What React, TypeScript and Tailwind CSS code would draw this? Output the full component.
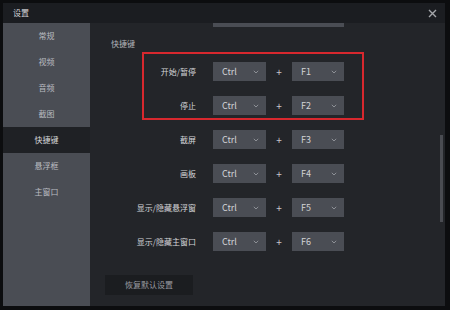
import React from "react";

const font = { fontFamily: '"Noto Sans CJK SC", "Noto Sans", sans-serif' };

const menu = ["常规", "视频", "音频", "截图", "快捷键", "悬浮框", "主窗口"];

const shortcuts = [
  { label: "开始/暂停", key: "F1" },
  { label: "停止", key: "F2" },
  { label: "截屏", key: "F3" },
  { label: "画板", key: "F4" },
  { label: "显示/隐藏悬浮窗", key: "F5" },
  { label: "显示/隐藏主窗口", key: "F6" },
];

const Chevron = () => (
  <svg width="6" height="4" viewBox="0 0 6 4" className="shrink-0">
    <path d="M0.8 0.8 L3 3 L5.2 0.8" fill="none" stroke="#8d9096" strokeWidth="1" />
  </svg>
);

const Select = ({ value, width }: { value: string; width: string }) => (
  <div className={`${width} h-[19px] bg-[#4a4d54] flex items-center justify-between pl-[9px] pr-[7px]`}>
    <span className="text-[9px] leading-none text-[#d2d3d6]">{value}</span>
    <Chevron />
  </div>
);

export default function App() {
  return (
    <div
      className="w-[450px] h-[310px] bg-[#0c0d0f] pt-[3px] pl-[3px] pr-[5px] pb-[4px] flex"
      style={font}
    >
      <div className="flex-1 flex flex-col">
        {/* title bar */}
        <div className="h-[20px] bg-[#1b1d21] flex items-center justify-between pl-[10px] pr-[8px]">
          <span className="text-[8px] text-[#d4d5d8]">设置</span>
          <svg width="9" height="9" viewBox="0 0 9 9">
            <path d="M1 1 L8 8 M8 1 L1 8" stroke="#a4a6aa" strokeWidth="1.4" />
          </svg>
        </div>

        <div className="flex-1 flex">
          {/* sidebar */}
          <div className="w-[87px] bg-[#4a4d54] flex flex-col">
            {menu.map((m) => (
              <div
                key={m}
                className={`h-[26px] flex items-center justify-center text-[8px] ${
                  m === "快捷键" ? "bg-[#1f2125] text-[#d8d9dc]" : "text-[#b9bbc0]"
                }`}
              >
                {m}
              </div>
            ))}
          </div>

          {/* content */}
          <div className="flex-1 bg-[#232529] relative overflow-hidden">
            <div className="ml-[123px] w-[131px] h-[4px] bg-[#4a4d54]" />
            <div className="mt-[11px] ml-[21px] h-[12px] flex items-center text-[8px] text-[#b4b6ba]">
              快捷键
            </div>

            <div className="mt-[12px] flex flex-col gap-[15px]">
              {shortcuts.map((s) => (
                <div key={s.key} className="flex items-center h-[19px]">
                  <div className="w-[106px] text-right text-[8px] text-[#d4d5d8]">{s.label}</div>
                  <div className="ml-[17px]">
                    <Select value="Ctrl" width="w-[53px]" />
                  </div>
                  <div className="w-[26px] text-center text-[10px] text-[#c8c9cc]">+</div>
                  <Select value={s.key} width="w-[52px]" />
                </div>
              ))}
            </div>

            <div className="mt-[24px] ml-[15px] w-[88px] h-[20px] bg-[#1b1d20] flex items-center justify-center text-[8px] text-[#9a9ca1]">
              恢复默认设置
            </div>

            {/* highlight annotation */}
            <div className="absolute left-[52px] top-[29px] w-[222px] h-[68px] border-2 border-[#d7282e]" />

            {/* scrollbar */}
            <div className="absolute left-[350px] top-[112px] w-[3px] h-[87px] bg-[#4a4c52]" />
          </div>
        </div>
      </div>
    </div>
  );
}
